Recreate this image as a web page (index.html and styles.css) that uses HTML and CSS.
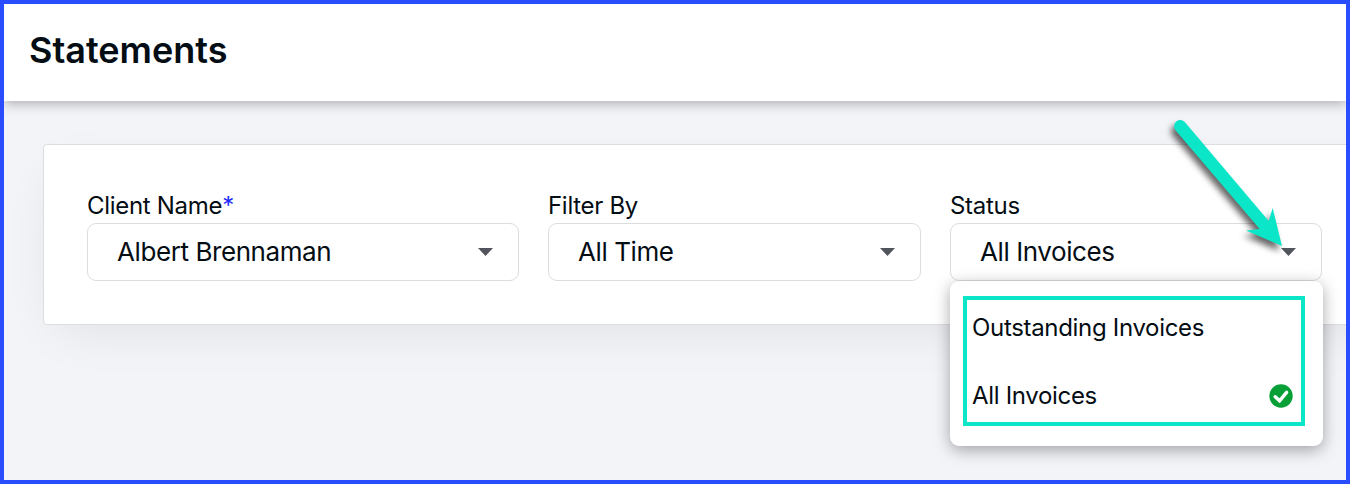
FILE: index.html
```html
<!DOCTYPE html>
<html lang="en">
<head>
<meta charset="utf-8">
<title>Statements</title>
<link rel="stylesheet" href="styles.css">
</head>
<body>
<div class="frame">
  <header class="header"><h1 class="title">Statements</h1></header>
  <main class="content">
    <section class="card">
      <div class="field field-client">
        <label class="label">Client Name<span class="required">*</span></label>
        <div class="select"><span class="value">Albert Brennaman</span><span class="caret"></span></div>
      </div>
      <div class="field field-filter">
        <label class="label">Filter By</label>
        <div class="select"><span class="value">All Time</span><span class="caret"></span></div>
      </div>
      <div class="field field-status">
        <label class="label">Status</label>
        <div class="select"><span class="value">All Invoices</span><span class="caret"></span></div>
        <div class="menu">
          <div class="options">
            <div class="option"><span>Outstanding Invoices</span></div>
            <div class="option"><span>All Invoices</span>
              <svg class="check" viewBox="0 0 24 24"><circle cx="12" cy="12" r="11.7" fill="#089f37"/><path d="M6.2 12.8 10.6 16.8 17.6 8.4" fill="none" stroke="#fff" stroke-width="3.5" stroke-linecap="round" stroke-linejoin="miter"/></svg>
            </div>
          </div>
        </div>
      </div>
    </section>
  </main>
  <svg class="arrow" viewBox="0 0 130 150"><path d="M15.5 20.2A6 6 0 0 1 25 12.3L108.7 111 112.7 98 122 136 86 120.5 99.7 119Z" fill="#0ce6c8"/></svg>
</div>
</body>
</html>
```
FILE: styles.css
```css
* { box-sizing: border-box; }

body {
  margin: 0;
  font-family: Inter, "Liberation Sans", sans-serif;
  color: #040d14;
}

.frame {
  position: relative;
  display: flex;
  flex-direction: column;
  width: 1350px;
  height: 484px;
  overflow: hidden;
  border: 4px solid #2a4dff;
  background: #f3f4f8;
}

.header {
  position: relative;
  z-index: 1;
  display: flex;
  align-items: center;
  flex: none;
  height: 97px;
  padding: 0 25px 6px;
  background: #fff;
  box-shadow: 0 3px 11px rgba(0, 0, 0, .28);
}

.title {
  margin: 0;
  font-size: 36px;
  font-weight: 600;
  line-height: 44px;
}

.content { padding: 43px 0 0 39px; }

.card {
  display: flex;
  gap: 29px;
  width: 1400px;
  height: 181px;
  padding: 46px 43px 0;
  border: 1px solid #dcdddf;
  border-radius: 4px;
  background: #fff;
  box-shadow: 0 16px 50px -14px rgba(0, 0, 0, .09);
}

.field { position: relative; flex: none; }
.field-client { width: 432px; }
.field-filter { width: 373px; }
.field-status { width: 372px; }

.label {
  display: block;
  height: 32px;
  font-size: 24px;
  line-height: 30px;
  letter-spacing: -.3px;
  white-space: nowrap;
}

.required { color: #1f2bff; }

.select {
  display: flex;
  align-items: center;
  justify-content: space-between;
  height: 58px;
  padding: 0 25px 0 29px;
  border: 1px solid #dcdddf;
  border-radius: 9px;
}

.value {
  font-size: 26px;
  line-height: 32px;
  letter-spacing: -.42px;
  white-space: nowrap;
}

.caret {
  width: 15px;
  height: 8px;
  background: #51545c;
  clip-path: polygon(0 0, 100% 0, 50% 100%);
}

.menu {
  position: absolute;
  top: 90px;
  left: 0;
  width: 373px;
  height: 165px;
  padding: 15px 18px 20px 13px;
  border-radius: 9px;
  background: #fff;
  box-shadow: 0 4px 16px rgba(0, 0, 0, .34);
}

.options {
  height: 130px;
  padding: 0 8px 0 5px;
  border: 4px solid #0ce6c8;
}

.option {
  display: flex;
  align-items: center;
  justify-content: space-between;
  height: 56px;
  font-size: 24px;
  line-height: 30px;
  letter-spacing: -.32px;
  white-space: nowrap;
}

.option + .option { margin-top: 12px; }

.check { width: 24px; height: 24px; }

.arrow {
  position: absolute;
  top: 106px;
  left: 1156px;
  width: 130px;
  height: 150px;
  overflow: visible;
  filter: drop-shadow(-3px 5px 3px rgba(0, 0, 0, .6));
}
```
